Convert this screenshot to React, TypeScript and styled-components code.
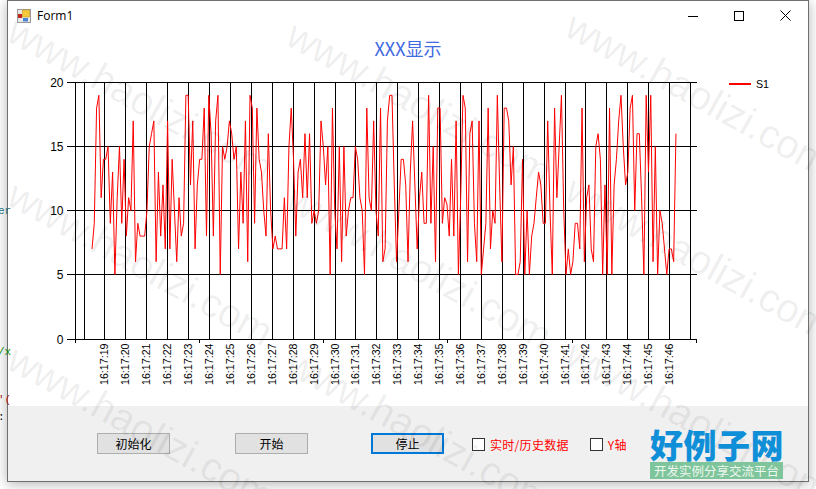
import React from "react";
import styled, { createGlobalStyle } from "styled-components";

const Global = createGlobalStyle`
  html, body { margin: 0; padding: 0; background: #fff; }
  #root { width: 816px; height: 489px; }
`;

const CJK = `"Noto Sans CJK SC", "Liberation Sans", sans-serif`;

const Desktop = styled.div`
  position: relative;
  width: 816px;
  height: 489px;
  overflow: hidden;
  background: #fff;
  padding-left: 7px;
  box-sizing: border-box;
`;

const Snippet = styled.span<{ $top: number; $color: string }>`
  position: absolute;
  left: -2px;
  top: ${(p) => p.$top}px;
  font: 11px/13px "Liberation Mono", monospace;
  color: ${(p) => p.$color};
`;

const Window = styled.div`
  width: 802px;
  height: 482px;
  box-sizing: border-box;
  border: 1px solid #6f6f6f;
  background: #fff;
  box-shadow: 0 2px 12px rgba(0, 0, 0, 0.3);
  display: flex;
  flex-direction: column;
`;

const TitleBar = styled.div`
  height: 29px;
  flex: none;
  display: flex;
  align-items: center;
  padding-left: 9px;
`;

const TitleIcon = styled.svg`
  margin-right: 6px;
`;

const TitleText = styled.span`
  font: 12px "Open Sans", sans-serif;
  color: #000;
  flex: 1;
`;

const Caption = styled.div`
  width: 46px;
  height: 29px;
  display: flex;
  align-items: center;
  justify-content: center;
`;

const Plot = styled.svg`
  display: block;
  flex: none;
`;

const BottomPanel = styled.div`
  flex: 1;
  background: #f0f0f0;
  display: flex;
  align-items: flex-start;
  padding: 27px 0 0 89px;
`;

const PanelButton = styled.button<{ $focused?: boolean; $after: number }>`
  width: 73px;
  height: 21px;
  margin-right: ${(p) => p.$after}px;
  box-sizing: border-box;
  padding: 0;
  background: #e1e1e1;
  border: ${(p) => (p.$focused ? "2px solid #0078d7" : "1px solid #adadad")};
  font: 12px/1 ${CJK};
  color: #000;
`;

const CheckRow = styled.label<{ $after: number }>`
  display: flex;
  align-items: center;
  gap: 5px;
  margin-top: 2px;
  margin-right: ${(p) => p.$after}px;
  height: 19px;
  font: 12px/1 ${CJK};
  letter-spacing: 0.3px;
  color: #f00;
`;

const CheckBox = styled.span`
  width: 13px;
  height: 13px;
  box-sizing: border-box;
  border: 1px solid #333;
  background: #fff;
`;

const WatermarkLayer = styled.div`
  position: absolute;
  left: 0;
  top: 0;
  width: 900px;
  display: grid;
  grid-template-columns: repeat(3, 279px);
  grid-auto-rows: 164px;
  pointer-events: none;
`;

const WatermarkText = styled.span<{ $shift: number }>`
  display: block;
  white-space: nowrap;
  font: 40px "Liberation Sans", sans-serif;
  color: rgba(0, 0, 0, 0.07);
  transform-origin: 0 0;
  transform: translate(22px, ${(p) => 8 + p.$shift}px) rotate(29deg);
`;

const Logo = styled.div`
  position: absolute;
  left: 650px;
  top: 426px;
  width: 133px;
  display: flex;
  flex-direction: column;
`;

const LogoMark = styled.div`
  height: 36px;
  font: 900 33px/36px ${CJK};
  letter-spacing: 0.5px;
  color: #0f8fd8;
  white-space: nowrap;
`;

const LogoStrip = styled.div`
  height: 17px;
  background: #7fc59b;
  color: #eef7f0;
  font: 12.5px/17px ${CJK};
  text-align: center;
  white-space: nowrap;
  overflow: hidden;
`;

const data = [
  7, 9, 18, 19, 11, 14, 14, 15, 9, 13, 5, 11, 15, 9, 14, 8, 11, 10, 17, 6,
  9, 8, 8, 8, 10, 15, 16, 17, 6, 13, 8, 12, 7, 17, 7, 14, 10, 6, 11, 8,
  9, 19, 19, 12, 17, 7, 12, 14, 14, 18, 8, 19, 16, 8, 17, 19, 5, 15, 14, 15,
  17, 16, 14, 15, 7, 13, 9, 17, 6, 19, 18, 9, 18, 14, 13, 10, 8, 16, 10, 7,
  8, 7, 7, 7, 11, 7, 15, 18, 14, 8, 13, 14, 11, 16, 11, 16, 9, 10, 9, 10,
  17, 15, 12, 15, 5, 18, 10, 7, 15, 6, 15, 8, 10, 11, 11, 15, 14, 11, 10, 5,
  18, 11, 10, 17, 10, 8, 18, 6, 7, 17, 19, 19, 12, 6, 10, 14, 14, 12, 6, 13,
  17, 12, 7, 11, 13, 9, 9, 19, 9, 15, 6, 18, 18, 9, 11, 10.5, 8, 14, 8, 17,
  5, 11, 19, 18, 6, 16, 17, 9, 6, 17, 5, 7, 9, 18, 7, 10, 9, 19, 12, 6,
  18, 18, 17, 12, 15, 5, 5, 6, 14, 5, 10, 5, 8, 9, 11, 13, 12, 9, 9, 17,
  10, 5, 18, 11, 15, 19, 10, 5, 7, 5, 6, 9, 9, 7, 18, 6, 11, 12, 7, 6,
  15, 16, 14, 5, 12, 5, 18, 5, 12, 14, 17, 19, 15, 12, 13, 18, 19, 10, 16, 16,
  11, 5, 19, 13, 19, 6, 15, 5, 10, 9, 7, 5, 7, 7, 6, 16,
];

const gridX = [
  104, 125, 146, 167, 188, 209, 230, 251, 272, 293, 314, 335, 355, 376, 397, 418, 439, 460,
  481, 502, 523, 544, 565, 585, 606, 627, 648, 669,
];
const gridY = [82, 146, 210, 274, 339];
const yLabels = ["20", "15", "10", "5", "0"];
const lowerTicks = [75, 199, 323, 447, 572, 696];
const columnShift = [0, 4, -5];

const points = data
  .map((v, i) => `${(92 + 2.29 * i).toFixed(2)},${(338.5 - 12.8 * v).toFixed(1)}`)
  .join(" ");

const WM = "www.haolizi.com";

export default function App() {
  return (
    <Desktop>
      <Global />
      <Snippet $top={205} $color="#1b6f7f">er</Snippet>
      <Snippet $top={346} $color="#0a8a0a">/x</Snippet>
      <Snippet $top={394} $color="#a31515">'(</Snippet>
      <Snippet $top={411} $color="#000">:</Snippet>
      <Window>
        <TitleBar>
          <TitleIcon width="14" height="14" viewBox="0 0 14 14">
            <rect x="0.5" y="0.5" width="13" height="13" fill="#e8e8e8" stroke="#9a9a9a" />
            <rect x="1" y="5" width="4" height="4" fill="#c0281c" />
            <rect x="5.5" y="1" width="7" height="7" fill="#f4c93a" stroke="#c79a1a" strokeWidth="0.6" />
            <rect x="6" y="9" width="5" height="3.5" fill="#4a86d8" />
          </TitleIcon>
          <TitleText>Form1</TitleText>
          <Caption>
            <svg width="10" height="10" viewBox="0 0 10 10">
              <path d="M0 5.5H10" stroke="#000" fill="none" />
            </svg>
          </Caption>
          <Caption>
            <svg width="10" height="10" viewBox="0 0 10 10">
              <rect x="0.5" y="0.5" width="9" height="9" stroke="#000" fill="none" />
            </svg>
          </Caption>
          <Caption>
            <svg width="11" height="11" viewBox="0 0 11 11">
              <path d="M0.5 0.5L10.5 10.5M10.5 0.5L0.5 10.5" stroke="#000" fill="none" />
            </svg>
          </Caption>
        </TitleBar>
        <Plot width="800" height="376" viewBox="8 30 800 376">
          <text
            x="408"
            y="56"
            textAnchor="middle"
            fontSize="18"
            fill="#4169e1"
            fontFamily={CJK}
          >
            XXX显示
          </text>
          {gridY.map((y, i) => (
            <g key={y}>
              <path d={`M67 ${y + 0.5}H697`} stroke="#000" />
              <text
                x="63.5"
                y={y + 5}
                textAnchor="end"
                fontSize="12"
                fill="#000"
                fontFamily='"Liberation Sans", sans-serif'
              >
                {yLabels[i]}
              </text>
            </g>
          ))}
          {[75, 84, ...gridX, 690].map((x) => (
            <path key={x} d={`M${x + 0.5} 82V340`} stroke="#000" />
          ))}
          {lowerTicks.map((x) => (
            <path key={x} d={`M${x + 0.5} 340V343`} stroke="#000" />
          ))}
          {gridX.map((x, i) => (
            <text
              key={x}
              transform={`translate(${x + 4} 385) rotate(-90)`}
              fontSize="10.67"
              fill="#000"
              fontFamily='"Liberation Sans", sans-serif'
            >
              {`16:17:${19 + i}`}
            </text>
          ))}
          <polyline points={points} fill="none" stroke="#f00" strokeWidth="1" strokeLinejoin="miter" />
          <path d="M729 84H751" stroke="#f00" strokeWidth="2" />
          <text x="756" y="88" fontSize="10.67" fill="#000" fontFamily='"Liberation Sans", sans-serif'>
            S1
          </text>
        </Plot>
        <BottomPanel>
          <PanelButton $after={65}>初始化</PanelButton>
          <PanelButton $after={63}>开始</PanelButton>
          <PanelButton $focused $after={28}>停止</PanelButton>
          <CheckRow $after={21}>
            <CheckBox />
            实时/历史数据
          </CheckRow>
          <CheckRow $after={0}>
            <CheckBox />
            Y轴
          </CheckRow>
        </BottomPanel>
      </Window>
      <WatermarkLayer>
        {Array.from({ length: 9 }, (_, i) => (
          <div key={i}>
            <WatermarkText $shift={columnShift[i % 3]}>{WM}</WatermarkText>
          </div>
        ))}
      </WatermarkLayer>
      <Logo>
        <LogoMark>好例子网</LogoMark>
        <LogoStrip>开发实例分享交流平台</LogoStrip>
      </Logo>
    </Desktop>
  );
}
